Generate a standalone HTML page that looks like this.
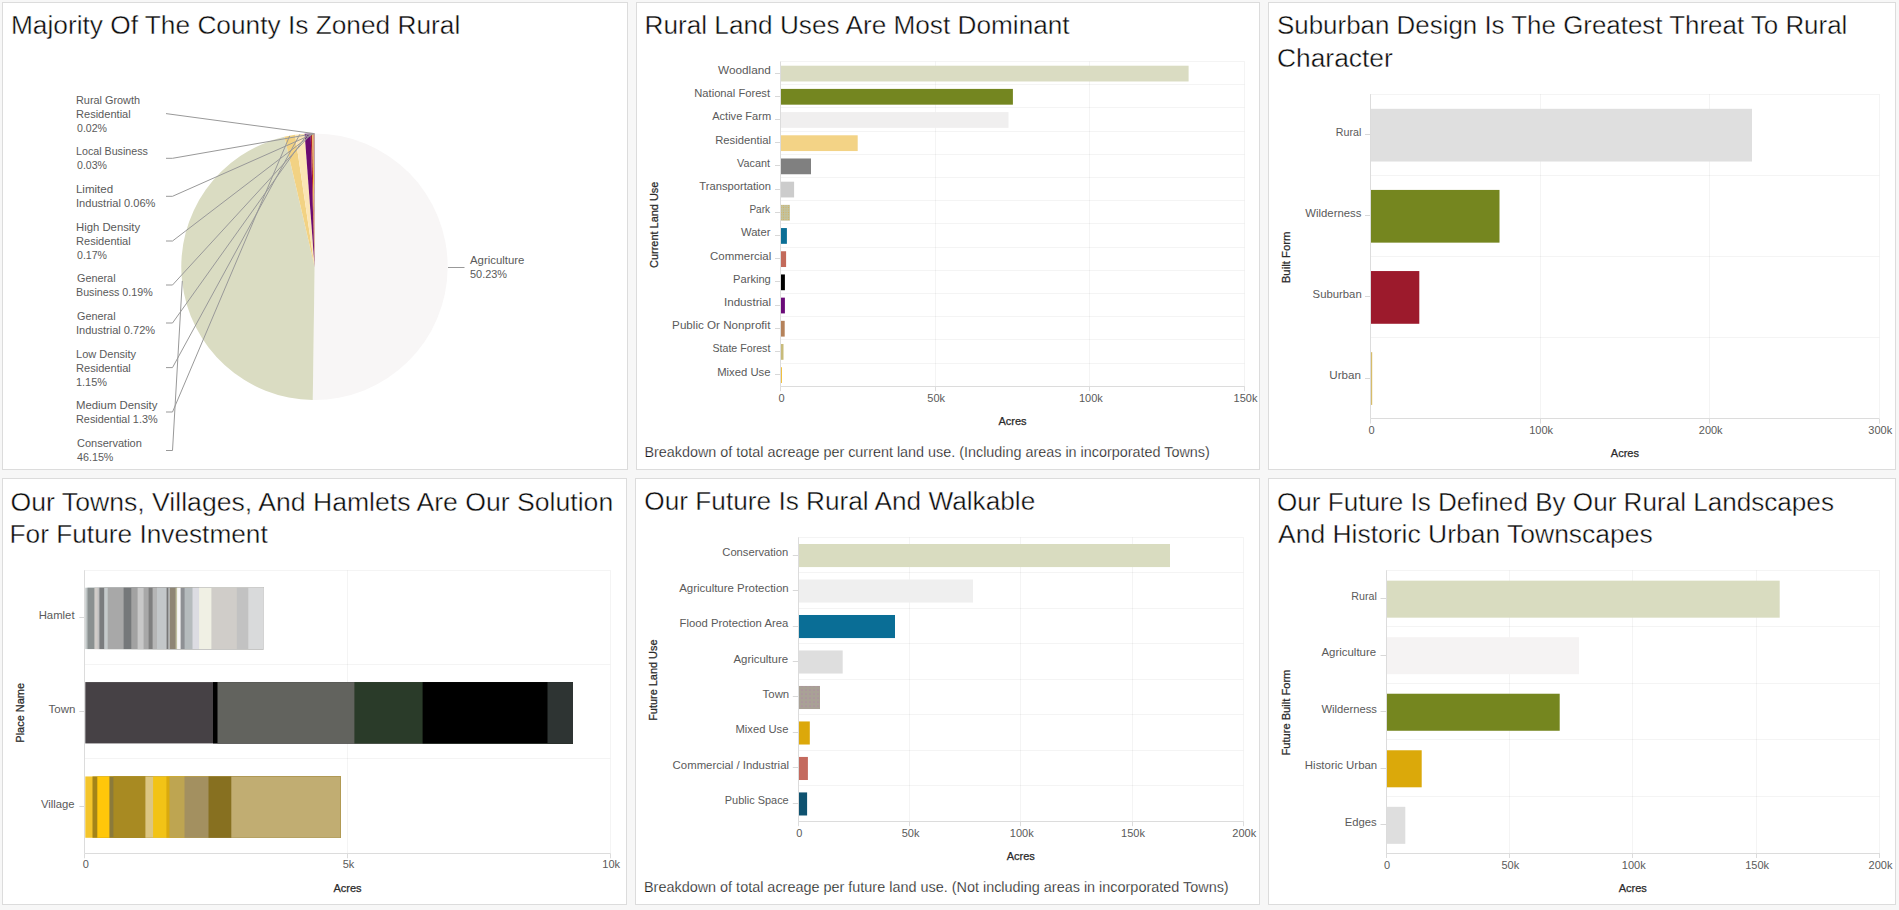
<!DOCTYPE html>
<html><head><meta charset="utf-8"><style>
html,body{margin:0;padding:0;background:#f7f7f7;width:1899px;height:910px;overflow:hidden;}
svg{position:absolute;left:0;top:0;font-family:"Liberation Sans", sans-serif;}
</style></head><body>
<svg width="1899" height="910" viewBox="0 0 1899 910">
<defs>
<pattern id="pPark" x="0" y="0" width="2.4" height="2.4" patternUnits="userSpaceOnUse"><rect width="2.4" height="2.4" fill="#c2c3a0"/><circle cx="1.2" cy="1.2" r="0.55" fill="#d6ae5a"/></pattern>
<pattern id="pTown" x="0" y="0" width="4" height="4" patternUnits="userSpaceOnUse"><rect width="4" height="4" fill="#a9a196"/><circle cx="2" cy="2" r="0.55" fill="#b274b0"/></pattern>
</defs>
<rect x="2.5" y="2.5" width="625" height="467" fill="#fff" stroke="#dcdcdc" stroke-width="1"/>
<rect x="636.5" y="2.5" width="623" height="467" fill="#fff" stroke="#dcdcdc" stroke-width="1"/>
<rect x="1268.5" y="2.5" width="627" height="467" fill="#fff" stroke="#dcdcdc" stroke-width="1"/>
<rect x="2.5" y="478.5" width="624" height="426" fill="#fff" stroke="#dcdcdc" stroke-width="1"/>
<rect x="635.5" y="478.5" width="624" height="426" fill="#fff" stroke="#dcdcdc" stroke-width="1"/>
<rect x="1268.5" y="478.5" width="627" height="426" fill="#fff" stroke="#dcdcdc" stroke-width="1"/>
<text x="10.98" y="34.00" font-size="26" fill="#0a0a0a" textLength="449.33" lengthAdjust="spacingAndGlyphs" stroke="#fff" stroke-width="0.4">Majority Of The County Is Zoned Rural</text>
<text x="644.48" y="34.00" font-size="26" fill="#0a0a0a" textLength="425.18" lengthAdjust="spacingAndGlyphs" stroke="#fff" stroke-width="0.4">Rural Land Uses Are Most Dominant</text>
<text x="1277.00" y="34.00" font-size="26" fill="#0a0a0a" textLength="570.32" lengthAdjust="spacingAndGlyphs" stroke="#fff" stroke-width="0.4">Suburban Design Is The Greatest Threat To Rural</text>
<text x="1276.99" y="67.00" font-size="26" fill="#0a0a0a" textLength="115.77" lengthAdjust="spacingAndGlyphs" stroke="#fff" stroke-width="0.4">Character</text>
<text x="10.58" y="510.50" font-size="26" fill="#0a0a0a" textLength="602.64" lengthAdjust="spacingAndGlyphs" stroke="#fff" stroke-width="0.4">Our Towns, Villages, And Hamlets Are Our Solution</text>
<text x="9.58" y="543.00" font-size="26" fill="#0a0a0a" textLength="258.18" lengthAdjust="spacingAndGlyphs" stroke="#fff" stroke-width="0.4">For Future Investment</text>
<text x="644.39" y="510.00" font-size="26" fill="#0a0a0a" textLength="390.88" lengthAdjust="spacingAndGlyphs" stroke="#fff" stroke-width="0.4">Our Future Is Rural And Walkable</text>
<text x="1277.00" y="510.50" font-size="26" fill="#0a0a0a" textLength="556.94" lengthAdjust="spacingAndGlyphs" stroke="#fff" stroke-width="0.4">Our Future Is Defined By Our Rural Landscapes</text>
<text x="1278.00" y="543.00" font-size="26" fill="#0a0a0a" textLength="374.75" lengthAdjust="spacingAndGlyphs" stroke="#fff" stroke-width="0.4">And Historic Urban Townscapes</text>
<path d="M314.6,266.7 L314.60,133.40 A133.3,133.3 0 1 1 312.76,399.99 Z" fill="#f8f6f6"/>
<path d="M314.6,266.7 L312.76,399.99 A133.3,133.3 0 0 1 284.38,136.87 Z" fill="#dadcc2"/>
<path d="M314.6,266.7 L284.38,136.87 A133.3,133.3 0 0 1 295.08,134.84 Z" fill="#f2d283"/>
<path d="M314.6,266.7 L295.08,134.84 A133.3,133.3 0 0 1 304.64,133.77 Z" fill="#fbe5b5"/>
<path d="M314.6,266.7 L304.64,133.77 A133.3,133.3 0 0 1 310.66,133.46 Z" fill="#6b0b70"/>
<path d="M314.6,266.7 L310.66,133.46 A133.3,133.3 0 0 1 312.26,133.42 Z" fill="#a82030"/>
<path d="M314.6,266.7 L312.26,133.42 A133.3,133.3 0 0 1 313.68,133.40 Z" fill="#f0c040"/>
<path d="M314.6,266.7 L313.68,133.40 A133.3,133.3 0 0 1 314.18,133.40 Z" fill="#a02890"/>
<path d="M314.6,266.7 L314.18,133.40 A133.3,133.3 0 0 1 314.43,133.40 Z" fill="#c06040"/>
<path d="M314.6,266.7 L314.43,133.40 A133.3,133.3 0 0 1 314.60,133.40 Z" fill="#505050"/>
<text x="76.01" y="104.20" font-size="11" fill="#5a5a5a" textLength="63.99" lengthAdjust="spacingAndGlyphs">Rural Growth</text>
<text x="75.99" y="117.80" font-size="11" fill="#5a5a5a" textLength="54.73" lengthAdjust="spacingAndGlyphs">Residential</text>
<text x="77.00" y="131.60" font-size="11" fill="#5a5a5a" textLength="30.00" lengthAdjust="spacingAndGlyphs">0.02%</text>
<polyline points="166,113.6 314.4,133.6" fill="none" stroke="#999999" stroke-width="1"/>
<text x="76.03" y="154.70" font-size="11" fill="#5a5a5a" textLength="71.87" lengthAdjust="spacingAndGlyphs">Local Business</text>
<text x="77.00" y="168.60" font-size="11" fill="#5a5a5a" textLength="30.00" lengthAdjust="spacingAndGlyphs">0.03%</text>
<polyline points="166,158.3 172.5,158.3 314.2,133.6" fill="none" stroke="#999999" stroke-width="1"/>
<text x="75.95" y="192.70" font-size="11" fill="#5a5a5a" textLength="37.24" lengthAdjust="spacingAndGlyphs">Limited</text>
<text x="75.99" y="206.80" font-size="11" fill="#5a5a5a" textLength="79.50" lengthAdjust="spacingAndGlyphs">Industrial 0.06%</text>
<polyline points="166,196.3 172.5,196.3 313.8,133.6" fill="none" stroke="#999999" stroke-width="1"/>
<text x="75.97" y="231.20" font-size="11" fill="#5a5a5a" textLength="64.20" lengthAdjust="spacingAndGlyphs">High Density</text>
<text x="75.99" y="244.80" font-size="11" fill="#5a5a5a" textLength="54.73" lengthAdjust="spacingAndGlyphs">Residential</text>
<text x="77.00" y="258.50" font-size="11" fill="#5a5a5a" textLength="30.00" lengthAdjust="spacingAndGlyphs">0.17%</text>
<polyline points="166,241 172.5,241 312.9,133.6" fill="none" stroke="#999999" stroke-width="1"/>
<text x="77.00" y="281.90" font-size="11" fill="#5a5a5a" textLength="38.54" lengthAdjust="spacingAndGlyphs">General</text>
<text x="76.03" y="295.80" font-size="11" fill="#5a5a5a" textLength="76.67" lengthAdjust="spacingAndGlyphs">Business 0.19%</text>
<polyline points="166,285 172.5,285 311.4,133.6" fill="none" stroke="#999999" stroke-width="1"/>
<text x="77.00" y="320.00" font-size="11" fill="#5a5a5a" textLength="38.54" lengthAdjust="spacingAndGlyphs">General</text>
<text x="76.00" y="333.80" font-size="11" fill="#5a5a5a" textLength="79.19" lengthAdjust="spacingAndGlyphs">Industrial 0.72%</text>
<polyline points="166,323 172.5,323 307.6,133.8" fill="none" stroke="#999999" stroke-width="1"/>
<text x="76.00" y="358.00" font-size="11" fill="#5a5a5a" textLength="60.12" lengthAdjust="spacingAndGlyphs">Low Density</text>
<text x="75.99" y="372.00" font-size="11" fill="#5a5a5a" textLength="54.83" lengthAdjust="spacingAndGlyphs">Residential</text>
<text x="76.01" y="385.80" font-size="11" fill="#5a5a5a" textLength="31.00" lengthAdjust="spacingAndGlyphs">1.15%</text>
<polyline points="166,367.6 172.5,367.6 299.8,134.4" fill="none" stroke="#999999" stroke-width="1"/>
<text x="75.97" y="408.90" font-size="11" fill="#5a5a5a" textLength="81.49" lengthAdjust="spacingAndGlyphs">Medium Density</text>
<text x="76.01" y="422.70" font-size="11" fill="#5a5a5a" textLength="81.66" lengthAdjust="spacingAndGlyphs">Residential 1.3%</text>
<polyline points="166,412 172.5,412 289.7,135.9" fill="none" stroke="#999999" stroke-width="1"/>
<text x="77.00" y="447.00" font-size="11" fill="#5a5a5a">Conservation</text>
<text x="77.00" y="460.80" font-size="11" fill="#5a5a5a" textLength="36.40" lengthAdjust="spacingAndGlyphs">46.15%</text>
<polyline points="166,450.5 172.5,450.5 182.3,280.9" fill="none" stroke="#999999" stroke-width="1"/>
<text x="470.00" y="263.50" font-size="11" fill="#5a5a5a" textLength="54.46" lengthAdjust="spacingAndGlyphs">Agriculture</text>
<text x="470.00" y="278.20" font-size="11" fill="#5a5a5a" textLength="37.01" lengthAdjust="spacingAndGlyphs">50.23%</text>
<line x1="448.00" y1="267.50" x2="464.50" y2="267.50" stroke="#999999" stroke-width="1"/>
<line x1="780.50" y1="61.50" x2="1244.50" y2="61.50" stroke="#000" stroke-opacity="0.045" stroke-width="1"/>
<line x1="780.50" y1="84.50" x2="1244.50" y2="84.50" stroke="#000" stroke-opacity="0.045" stroke-width="1"/>
<line x1="780.50" y1="107.50" x2="1244.50" y2="107.50" stroke="#000" stroke-opacity="0.045" stroke-width="1"/>
<line x1="780.50" y1="131.50" x2="1244.50" y2="131.50" stroke="#000" stroke-opacity="0.045" stroke-width="1"/>
<line x1="780.50" y1="154.50" x2="1244.50" y2="154.50" stroke="#000" stroke-opacity="0.045" stroke-width="1"/>
<line x1="780.50" y1="177.50" x2="1244.50" y2="177.50" stroke="#000" stroke-opacity="0.045" stroke-width="1"/>
<line x1="780.50" y1="200.50" x2="1244.50" y2="200.50" stroke="#000" stroke-opacity="0.045" stroke-width="1"/>
<line x1="780.50" y1="223.50" x2="1244.50" y2="223.50" stroke="#000" stroke-opacity="0.045" stroke-width="1"/>
<line x1="780.50" y1="247.50" x2="1244.50" y2="247.50" stroke="#000" stroke-opacity="0.045" stroke-width="1"/>
<line x1="780.50" y1="270.50" x2="1244.50" y2="270.50" stroke="#000" stroke-opacity="0.045" stroke-width="1"/>
<line x1="780.50" y1="293.50" x2="1244.50" y2="293.50" stroke="#000" stroke-opacity="0.045" stroke-width="1"/>
<line x1="780.50" y1="316.50" x2="1244.50" y2="316.50" stroke="#000" stroke-opacity="0.045" stroke-width="1"/>
<line x1="780.50" y1="339.50" x2="1244.50" y2="339.50" stroke="#000" stroke-opacity="0.045" stroke-width="1"/>
<line x1="780.50" y1="363.50" x2="1244.50" y2="363.50" stroke="#000" stroke-opacity="0.045" stroke-width="1"/>
<line x1="935.50" y1="61.50" x2="935.50" y2="386.20" stroke="#000" stroke-opacity="0.045" stroke-width="1"/>
<line x1="1089.50" y1="61.50" x2="1089.50" y2="386.20" stroke="#000" stroke-opacity="0.045" stroke-width="1"/>
<line x1="1244.50" y1="61.50" x2="1244.50" y2="386.20" stroke="#000" stroke-opacity="0.045" stroke-width="1"/>
<rect x="781.00" y="65.71" width="407.60" height="15.77" fill="#dadcc2"/>
<line x1="775.00" y1="73.50" x2="780.50" y2="73.50" stroke="#d8d8d8" stroke-width="1"/>
<text x="718.00" y="74.10" font-size="11" fill="#5a5a5a" textLength="52.87" lengthAdjust="spacingAndGlyphs">Woodland</text>
<rect x="781.00" y="88.90" width="231.90" height="15.77" fill="#748620"/>
<line x1="775.00" y1="96.50" x2="780.50" y2="96.50" stroke="#d8d8d8" stroke-width="1"/>
<text x="694.28" y="97.29" font-size="11" fill="#5a5a5a" textLength="75.80" lengthAdjust="spacingAndGlyphs">National Forest</text>
<rect x="781.00" y="112.10" width="227.50" height="15.77" fill="#f0efef"/>
<line x1="775.00" y1="119.50" x2="780.50" y2="119.50" stroke="#d8d8d8" stroke-width="1"/>
<text x="712.20" y="120.48" font-size="11" fill="#5a5a5a" textLength="58.99" lengthAdjust="spacingAndGlyphs">Active Farm</text>
<rect x="781.00" y="135.29" width="76.70" height="15.77" fill="#f3d386"/>
<line x1="775.00" y1="142.50" x2="780.50" y2="142.50" stroke="#d8d8d8" stroke-width="1"/>
<text x="715.18" y="143.68" font-size="11" fill="#5a5a5a" textLength="55.76" lengthAdjust="spacingAndGlyphs">Residential</text>
<rect x="781.00" y="158.48" width="30.00" height="15.77" fill="#808080"/>
<line x1="775.00" y1="165.50" x2="780.50" y2="165.50" stroke="#d8d8d8" stroke-width="1"/>
<text x="737.10" y="166.87" font-size="11" fill="#5a5a5a" textLength="32.85" lengthAdjust="spacingAndGlyphs">Vacant</text>
<rect x="781.00" y="181.68" width="13.10" height="15.77" fill="#cccccc"/>
<line x1="775.00" y1="189.50" x2="780.50" y2="189.50" stroke="#d8d8d8" stroke-width="1"/>
<text x="699.30" y="190.06" font-size="11" fill="#5a5a5a" textLength="71.74" lengthAdjust="spacingAndGlyphs">Transportation</text>
<rect x="781.00" y="204.87" width="8.90" height="15.77" fill="url(#pPark)"/>
<line x1="775.00" y1="212.50" x2="780.50" y2="212.50" stroke="#d8d8d8" stroke-width="1"/>
<text x="749.38" y="213.25" font-size="11" fill="#5a5a5a" textLength="20.77" lengthAdjust="spacingAndGlyphs">Park</text>
<rect x="781.00" y="228.06" width="5.90" height="15.77" fill="#0b6f96"/>
<line x1="775.00" y1="235.50" x2="780.50" y2="235.50" stroke="#d8d8d8" stroke-width="1"/>
<text x="741.00" y="236.45" font-size="11" fill="#5a5a5a" textLength="29.44" lengthAdjust="spacingAndGlyphs">Water</text>
<rect x="781.00" y="251.25" width="5.10" height="15.77" fill="#c36a5a"/>
<line x1="775.00" y1="258.50" x2="780.50" y2="258.50" stroke="#d8d8d8" stroke-width="1"/>
<text x="710.10" y="259.64" font-size="11" fill="#5a5a5a" textLength="61.12" lengthAdjust="spacingAndGlyphs">Commercial</text>
<rect x="781.00" y="274.45" width="3.90" height="15.77" fill="#000000"/>
<line x1="775.00" y1="281.50" x2="780.50" y2="281.50" stroke="#d8d8d8" stroke-width="1"/>
<text x="733.09" y="282.83" font-size="11" fill="#5a5a5a" textLength="37.71" lengthAdjust="spacingAndGlyphs">Parking</text>
<rect x="781.00" y="297.64" width="3.90" height="15.77" fill="#6a0a78"/>
<line x1="775.00" y1="305.50" x2="780.50" y2="305.50" stroke="#d8d8d8" stroke-width="1"/>
<text x="723.94" y="306.02" font-size="11" fill="#5a5a5a" textLength="47.24" lengthAdjust="spacingAndGlyphs">Industrial</text>
<rect x="781.00" y="320.83" width="3.70" height="15.77" fill="#b5825a"/>
<line x1="775.00" y1="328.50" x2="780.50" y2="328.50" stroke="#d8d8d8" stroke-width="1"/>
<text x="672.14" y="329.22" font-size="11" fill="#5a5a5a" textLength="98.29" lengthAdjust="spacingAndGlyphs">Public Or Nonprofit</text>
<rect x="781.00" y="344.03" width="2.50" height="15.77" fill="#c8bb7a"/>
<line x1="775.00" y1="351.50" x2="780.50" y2="351.50" stroke="#d8d8d8" stroke-width="1"/>
<text x="712.40" y="352.41" font-size="11" fill="#5a5a5a" textLength="58.02" lengthAdjust="spacingAndGlyphs">State Forest</text>
<rect x="781.00" y="367.22" width="1.00" height="15.77" fill="#f0c040"/>
<line x1="775.00" y1="374.50" x2="780.50" y2="374.50" stroke="#d8d8d8" stroke-width="1"/>
<text x="717.17" y="375.60" font-size="11" fill="#5a5a5a" textLength="53.29" lengthAdjust="spacingAndGlyphs">Mixed Use</text>
<line x1="780.50" y1="61.50" x2="780.50" y2="386.20" stroke="#dcdcdc" stroke-width="1"/>
<line x1="780.50" y1="386.50" x2="1244.50" y2="386.50" stroke="#dcdcdc" stroke-width="1"/>
<line x1="780.50" y1="386.20" x2="780.50" y2="391.20" stroke="#dcdcdc" stroke-width="1"/>
<text x="781.50" y="401.80" font-size="11" fill="#5a5a5a" text-anchor="middle">0</text>
<line x1="935.50" y1="386.20" x2="935.50" y2="391.20" stroke="#dcdcdc" stroke-width="1"/>
<text x="936.17" y="401.80" font-size="11" fill="#5a5a5a" text-anchor="middle">50k</text>
<line x1="1089.50" y1="386.20" x2="1089.50" y2="391.20" stroke="#dcdcdc" stroke-width="1"/>
<text x="1090.83" y="401.80" font-size="11" fill="#5a5a5a" text-anchor="middle">100k</text>
<line x1="1244.50" y1="386.20" x2="1244.50" y2="391.20" stroke="#dcdcdc" stroke-width="1"/>
<text x="1245.50" y="401.80" font-size="11" fill="#5a5a5a" text-anchor="middle">150k</text>
<text x="1012.50" y="424.80" font-size="11" fill="#2a2a2a" text-anchor="middle" textLength="28.20" lengthAdjust="spacingAndGlyphs" stroke="#2a2a2a" stroke-width="0.25">Acres</text>
<text transform="translate(658.0,224.8) rotate(-90)" font-size="11" stroke="#2a2a2a" stroke-width="0.25" fill="#2a2a2a" text-anchor="middle" textLength="86.4" lengthAdjust="spacingAndGlyphs">Current Land Use</text>
<text x="644.47" y="457.00" font-size="14" fill="#111" textLength="565.28" lengthAdjust="spacingAndGlyphs" stroke="#fff" stroke-width="0.25">Breakdown of total acreage per current land use. (Including areas in incorporated Towns)</text>
<line x1="1370.50" y1="94.50" x2="1879.30" y2="94.50" stroke="#000" stroke-opacity="0.045" stroke-width="1"/>
<line x1="1370.50" y1="175.50" x2="1879.30" y2="175.50" stroke="#000" stroke-opacity="0.045" stroke-width="1"/>
<line x1="1370.50" y1="256.50" x2="1879.30" y2="256.50" stroke="#000" stroke-opacity="0.045" stroke-width="1"/>
<line x1="1370.50" y1="337.50" x2="1879.30" y2="337.50" stroke="#000" stroke-opacity="0.045" stroke-width="1"/>
<line x1="1540.50" y1="94.10" x2="1540.50" y2="418.60" stroke="#000" stroke-opacity="0.045" stroke-width="1"/>
<line x1="1709.50" y1="94.10" x2="1709.50" y2="418.60" stroke="#000" stroke-opacity="0.045" stroke-width="1"/>
<line x1="1879.50" y1="94.10" x2="1879.50" y2="418.60" stroke="#000" stroke-opacity="0.045" stroke-width="1"/>
<rect x="1371.00" y="108.80" width="381.00" height="52.73" fill="#dfdfdf"/>
<line x1="1365.00" y1="134.50" x2="1370.50" y2="134.50" stroke="#d8d8d8" stroke-width="1"/>
<text x="1335.73" y="135.66" font-size="11" fill="#5a5a5a" textLength="25.56" lengthAdjust="spacingAndGlyphs">Rural</text>
<rect x="1371.00" y="189.92" width="128.50" height="52.73" fill="#75861f"/>
<line x1="1365.00" y1="215.50" x2="1370.50" y2="215.50" stroke="#d8d8d8" stroke-width="1"/>
<text x="1305.30" y="216.79" font-size="11" fill="#5a5a5a" textLength="56.12" lengthAdjust="spacingAndGlyphs">Wilderness</text>
<rect x="1371.00" y="271.05" width="48.30" height="52.73" fill="#9c1a2c"/>
<line x1="1365.00" y1="296.50" x2="1370.50" y2="296.50" stroke="#d8d8d8" stroke-width="1"/>
<text x="1312.60" y="297.91" font-size="11" fill="#5a5a5a" textLength="49.14" lengthAdjust="spacingAndGlyphs">Suburban</text>
<rect x="1371.00" y="352.17" width="1.20" height="52.73" fill="#d6bc6a"/>
<line x1="1365.00" y1="378.50" x2="1370.50" y2="378.50" stroke="#d8d8d8" stroke-width="1"/>
<text x="1329.34" y="379.04" font-size="11" fill="#5a5a5a" textLength="31.62" lengthAdjust="spacingAndGlyphs">Urban</text>
<line x1="1370.50" y1="94.10" x2="1370.50" y2="418.60" stroke="#dcdcdc" stroke-width="1"/>
<line x1="1370.50" y1="418.50" x2="1879.30" y2="418.50" stroke="#dcdcdc" stroke-width="1"/>
<line x1="1370.50" y1="418.60" x2="1370.50" y2="423.60" stroke="#dcdcdc" stroke-width="1"/>
<text x="1371.50" y="434.00" font-size="11" fill="#5a5a5a" text-anchor="middle">0</text>
<line x1="1540.50" y1="418.60" x2="1540.50" y2="423.60" stroke="#dcdcdc" stroke-width="1"/>
<text x="1541.10" y="434.00" font-size="11" fill="#5a5a5a" text-anchor="middle">100k</text>
<line x1="1709.50" y1="418.60" x2="1709.50" y2="423.60" stroke="#dcdcdc" stroke-width="1"/>
<text x="1710.70" y="434.00" font-size="11" fill="#5a5a5a" text-anchor="middle">200k</text>
<line x1="1879.50" y1="418.60" x2="1879.50" y2="423.60" stroke="#dcdcdc" stroke-width="1"/>
<text x="1880.30" y="434.00" font-size="11" fill="#5a5a5a" text-anchor="middle">300k</text>
<text x="1624.90" y="456.50" font-size="11" fill="#2a2a2a" text-anchor="middle" textLength="28.20" lengthAdjust="spacingAndGlyphs" stroke="#2a2a2a" stroke-width="0.25">Acres</text>
<text transform="translate(1290.0,257.4) rotate(-90)" font-size="11" stroke="#2a2a2a" stroke-width="0.25" fill="#2a2a2a" text-anchor="middle" textLength="51.6" lengthAdjust="spacingAndGlyphs">Built Form</text>
<line x1="84.80" y1="570.50" x2="610.20" y2="570.50" stroke="#000" stroke-opacity="0.045" stroke-width="1"/>
<line x1="84.80" y1="664.50" x2="610.20" y2="664.50" stroke="#000" stroke-opacity="0.045" stroke-width="1"/>
<line x1="84.80" y1="758.50" x2="610.20" y2="758.50" stroke="#000" stroke-opacity="0.045" stroke-width="1"/>
<line x1="347.50" y1="570.20" x2="347.50" y2="853.30" stroke="#000" stroke-opacity="0.045" stroke-width="1"/>
<line x1="610.50" y1="570.20" x2="610.50" y2="853.30" stroke="#000" stroke-opacity="0.045" stroke-width="1"/>
<rect x="85.30" y="587.71" width="178.30" height="61.34" fill="#bfc5c5"/>
<rect x="87.50" y="587.71" width="176.10" height="61.34" fill="#8a9090"/>
<rect x="94.40" y="587.71" width="169.20" height="61.34" fill="#d0ccc8"/>
<rect x="97.60" y="587.71" width="166.00" height="61.34" fill="#c0c0c0"/>
<rect x="99.40" y="587.71" width="164.20" height="61.34" fill="#7a7c7e"/>
<rect x="104.20" y="587.71" width="159.40" height="61.34" fill="#c5cacb"/>
<rect x="107.70" y="587.71" width="155.90" height="61.34" fill="#a8a8a8"/>
<rect x="123.60" y="587.71" width="140.00" height="61.34" fill="#75787a"/>
<rect x="131.30" y="587.71" width="132.30" height="61.34" fill="#a2a2a2"/>
<rect x="137.60" y="587.71" width="126.00" height="61.34" fill="#c8c8c8"/>
<rect x="143.60" y="587.71" width="120.00" height="61.34" fill="#a8a8a8"/>
<rect x="148.60" y="587.71" width="115.00" height="61.34" fill="#7f7f7f"/>
<rect x="152.60" y="587.71" width="111.00" height="61.34" fill="#b5b5b5"/>
<rect x="157.00" y="587.71" width="106.60" height="61.34" fill="#c3c7c9"/>
<rect x="166.60" y="587.71" width="97.00" height="61.34" fill="#777777"/>
<rect x="168.40" y="587.71" width="95.20" height="61.34" fill="#c3c7c9"/>
<rect x="169.70" y="587.71" width="93.90" height="61.34" fill="#8e8574"/>
<rect x="175.60" y="587.71" width="88.00" height="61.34" fill="#c0bfa0"/>
<rect x="177.10" y="587.71" width="86.50" height="61.34" fill="#f5f5f5"/>
<rect x="180.60" y="587.71" width="83.00" height="61.34" fill="#8e9094"/>
<rect x="184.60" y="587.71" width="79.00" height="61.34" fill="#b5bbbd"/>
<rect x="192.50" y="587.71" width="71.10" height="61.34" fill="#dcdce2"/>
<rect x="199.10" y="587.71" width="64.50" height="61.34" fill="#f0f0e4"/>
<rect x="211.40" y="587.71" width="52.20" height="61.34" fill="#d0cdc9"/>
<rect x="236.80" y="587.71" width="26.80" height="61.34" fill="#c2c2c2"/>
<rect x="248.30" y="587.71" width="15.30" height="61.34" fill="#d9dadb"/>
<line x1="79.30" y1="617.50" x2="84.80" y2="617.50" stroke="#d8d8d8" stroke-width="1"/>
<text x="38.67" y="619.08" font-size="11" fill="#5a5a5a" textLength="35.87" lengthAdjust="spacingAndGlyphs">Hamlet</text>
<rect x="85.30" y="682.08" width="487.70" height="61.34" fill="#464145"/>
<rect x="213.00" y="682.08" width="360.00" height="61.34" fill="#000000"/>
<rect x="217.50" y="682.08" width="355.50" height="61.34" fill="#62635e"/>
<rect x="354.40" y="682.08" width="218.60" height="61.34" fill="#2a3b29"/>
<rect x="422.60" y="682.08" width="150.40" height="61.34" fill="#000000"/>
<rect x="547.50" y="682.08" width="25.50" height="61.34" fill="#2e3433"/>
<line x1="79.30" y1="711.50" x2="84.80" y2="711.50" stroke="#d8d8d8" stroke-width="1"/>
<text x="48.60" y="713.45" font-size="11" fill="#5a5a5a" textLength="26.82" lengthAdjust="spacingAndGlyphs">Town</text>
<rect x="85.30" y="776.45" width="255.20" height="61.34" fill="#f4c52c"/>
<rect x="92.50" y="776.45" width="248.00" height="61.34" fill="#a48418"/>
<rect x="97.30" y="776.45" width="243.20" height="61.34" fill="#ffc70a"/>
<rect x="109.40" y="776.45" width="231.10" height="61.34" fill="#8b7a3a"/>
<rect x="113.40" y="776.45" width="227.10" height="61.34" fill="#a88a22"/>
<rect x="145.40" y="776.45" width="195.10" height="61.34" fill="#dcc682"/>
<rect x="153.10" y="776.45" width="187.40" height="61.34" fill="#f2c316"/>
<rect x="166.40" y="776.45" width="174.10" height="61.34" fill="#d9a90e"/>
<rect x="169.50" y="776.45" width="171.00" height="61.34" fill="#bea551"/>
<rect x="184.50" y="776.45" width="156.00" height="61.34" fill="#a39060"/>
<rect x="208.50" y="776.45" width="132.00" height="61.34" fill="#877020"/>
<rect x="231.30" y="776.45" width="109.20" height="61.34" fill="#c1ad72"/>
<line x1="79.30" y1="806.50" x2="84.80" y2="806.50" stroke="#d8d8d8" stroke-width="1"/>
<text x="40.90" y="807.82" font-size="11" fill="#5a5a5a" textLength="33.62" lengthAdjust="spacingAndGlyphs">Village</text>
<line x1="84.50" y1="570.20" x2="84.50" y2="853.30" stroke="#dcdcdc" stroke-width="1"/>
<line x1="84.80" y1="853.50" x2="610.20" y2="853.50" stroke="#dcdcdc" stroke-width="1"/>
<line x1="84.50" y1="853.30" x2="84.50" y2="858.30" stroke="#dcdcdc" stroke-width="1"/>
<text x="85.80" y="868.00" font-size="11" fill="#5a5a5a" text-anchor="middle">0</text>
<line x1="347.50" y1="853.30" x2="347.50" y2="858.30" stroke="#dcdcdc" stroke-width="1"/>
<text x="348.50" y="868.00" font-size="11" fill="#5a5a5a" text-anchor="middle">5k</text>
<line x1="610.50" y1="853.30" x2="610.50" y2="858.30" stroke="#dcdcdc" stroke-width="1"/>
<text x="611.20" y="868.00" font-size="11" fill="#5a5a5a" text-anchor="middle">10k</text>
<text x="347.50" y="891.50" font-size="11" fill="#2a2a2a" text-anchor="middle" textLength="28.20" lengthAdjust="spacingAndGlyphs" stroke="#2a2a2a" stroke-width="0.25">Acres</text>
<text transform="translate(24.0,712.8) rotate(-90)" font-size="11" stroke="#2a2a2a" stroke-width="0.25" fill="#2a2a2a" text-anchor="middle" textLength="59.8" lengthAdjust="spacingAndGlyphs">Place Name</text>
<line x1="798.30" y1="537.50" x2="1243.30" y2="537.50" stroke="#000" stroke-opacity="0.045" stroke-width="1"/>
<line x1="798.30" y1="572.50" x2="1243.30" y2="572.50" stroke="#000" stroke-opacity="0.045" stroke-width="1"/>
<line x1="798.30" y1="608.50" x2="1243.30" y2="608.50" stroke="#000" stroke-opacity="0.045" stroke-width="1"/>
<line x1="798.30" y1="643.50" x2="1243.30" y2="643.50" stroke="#000" stroke-opacity="0.045" stroke-width="1"/>
<line x1="798.30" y1="679.50" x2="1243.30" y2="679.50" stroke="#000" stroke-opacity="0.045" stroke-width="1"/>
<line x1="798.30" y1="714.50" x2="1243.30" y2="714.50" stroke="#000" stroke-opacity="0.045" stroke-width="1"/>
<line x1="798.30" y1="750.50" x2="1243.30" y2="750.50" stroke="#000" stroke-opacity="0.045" stroke-width="1"/>
<line x1="798.30" y1="785.50" x2="1243.30" y2="785.50" stroke="#000" stroke-opacity="0.045" stroke-width="1"/>
<line x1="909.50" y1="537.30" x2="909.50" y2="821.20" stroke="#000" stroke-opacity="0.045" stroke-width="1"/>
<line x1="1020.50" y1="537.30" x2="1020.50" y2="821.20" stroke="#000" stroke-opacity="0.045" stroke-width="1"/>
<line x1="1132.50" y1="537.30" x2="1132.50" y2="821.20" stroke="#000" stroke-opacity="0.045" stroke-width="1"/>
<line x1="1243.50" y1="537.30" x2="1243.50" y2="821.20" stroke="#000" stroke-opacity="0.045" stroke-width="1"/>
<rect x="798.80" y="544.01" width="371.20" height="23.07" fill="#d9dcc0"/>
<line x1="792.80" y1="555.50" x2="798.30" y2="555.50" stroke="#d8d8d8" stroke-width="1"/>
<text x="722.30" y="556.04" font-size="11" fill="#5a5a5a" textLength="66.02" lengthAdjust="spacingAndGlyphs">Conservation</text>
<rect x="798.80" y="579.50" width="174.20" height="23.07" fill="#efefef"/>
<line x1="792.80" y1="590.50" x2="798.30" y2="590.50" stroke="#d8d8d8" stroke-width="1"/>
<text x="679.20" y="591.53" font-size="11" fill="#5a5a5a" textLength="109.48" lengthAdjust="spacingAndGlyphs">Agriculture Protection</text>
<rect x="798.80" y="614.99" width="96.20" height="23.07" fill="#0a6e96"/>
<line x1="792.80" y1="626.50" x2="798.30" y2="626.50" stroke="#d8d8d8" stroke-width="1"/>
<text x="679.47" y="627.02" font-size="11" fill="#5a5a5a" textLength="108.82" lengthAdjust="spacingAndGlyphs">Flood Protection Area</text>
<rect x="798.80" y="650.47" width="43.90" height="23.07" fill="#dedede"/>
<line x1="792.80" y1="661.50" x2="798.30" y2="661.50" stroke="#d8d8d8" stroke-width="1"/>
<text x="733.40" y="662.51" font-size="11" fill="#5a5a5a" textLength="54.66" lengthAdjust="spacingAndGlyphs">Agriculture</text>
<rect x="798.80" y="685.96" width="21.20" height="23.07" fill="url(#pTown)"/>
<line x1="792.80" y1="696.50" x2="798.30" y2="696.50" stroke="#d8d8d8" stroke-width="1"/>
<text x="762.60" y="697.99" font-size="11" fill="#5a5a5a" textLength="26.61" lengthAdjust="spacingAndGlyphs">Town</text>
<rect x="798.80" y="721.45" width="11.00" height="23.07" fill="#dca80a"/>
<line x1="792.80" y1="732.50" x2="798.30" y2="732.50" stroke="#d8d8d8" stroke-width="1"/>
<text x="735.48" y="733.48" font-size="11" fill="#5a5a5a" textLength="52.99" lengthAdjust="spacingAndGlyphs">Mixed Use</text>
<rect x="798.80" y="756.94" width="9.10" height="23.07" fill="#c46a5e"/>
<line x1="792.80" y1="767.50" x2="798.30" y2="767.50" stroke="#d8d8d8" stroke-width="1"/>
<text x="672.60" y="768.97" font-size="11" fill="#5a5a5a" textLength="116.40" lengthAdjust="spacingAndGlyphs">Commercial / Industrial</text>
<rect x="798.80" y="792.42" width="8.30" height="23.07" fill="#0f5270"/>
<line x1="792.80" y1="803.50" x2="798.30" y2="803.50" stroke="#d8d8d8" stroke-width="1"/>
<text x="724.80" y="804.46" font-size="11" fill="#5a5a5a" textLength="63.91" lengthAdjust="spacingAndGlyphs">Public Space</text>
<line x1="798.50" y1="537.30" x2="798.50" y2="821.20" stroke="#dcdcdc" stroke-width="1"/>
<line x1="798.30" y1="821.50" x2="1243.30" y2="821.50" stroke="#dcdcdc" stroke-width="1"/>
<line x1="798.50" y1="821.20" x2="798.50" y2="826.20" stroke="#dcdcdc" stroke-width="1"/>
<text x="799.30" y="836.50" font-size="11" fill="#5a5a5a" text-anchor="middle">0</text>
<line x1="909.50" y1="821.20" x2="909.50" y2="826.20" stroke="#dcdcdc" stroke-width="1"/>
<text x="910.55" y="836.50" font-size="11" fill="#5a5a5a" text-anchor="middle">50k</text>
<line x1="1020.50" y1="821.20" x2="1020.50" y2="826.20" stroke="#dcdcdc" stroke-width="1"/>
<text x="1021.80" y="836.50" font-size="11" fill="#5a5a5a" text-anchor="middle">100k</text>
<line x1="1132.50" y1="821.20" x2="1132.50" y2="826.20" stroke="#dcdcdc" stroke-width="1"/>
<text x="1133.05" y="836.50" font-size="11" fill="#5a5a5a" text-anchor="middle">150k</text>
<line x1="1243.50" y1="821.20" x2="1243.50" y2="826.20" stroke="#dcdcdc" stroke-width="1"/>
<text x="1244.30" y="836.50" font-size="11" fill="#5a5a5a" text-anchor="middle">200k</text>
<text x="1020.80" y="859.50" font-size="11" fill="#2a2a2a" text-anchor="middle" textLength="28.20" lengthAdjust="spacingAndGlyphs" stroke="#2a2a2a" stroke-width="0.25">Acres</text>
<text transform="translate(657.0,680.2) rotate(-90)" font-size="11" stroke="#2a2a2a" stroke-width="0.25" fill="#2a2a2a" text-anchor="middle" textLength="81.3" lengthAdjust="spacingAndGlyphs">Future Land Use</text>
<text x="643.97" y="892.00" font-size="14" fill="#111" textLength="584.71" lengthAdjust="spacingAndGlyphs" stroke="#fff" stroke-width="0.25">Breakdown of total acreage per future land use. (Not including areas in incorporated Towns)</text>
<line x1="1386.00" y1="570.50" x2="1879.50" y2="570.50" stroke="#000" stroke-opacity="0.045" stroke-width="1"/>
<line x1="1386.00" y1="626.50" x2="1879.50" y2="626.50" stroke="#000" stroke-opacity="0.045" stroke-width="1"/>
<line x1="1386.00" y1="683.50" x2="1879.50" y2="683.50" stroke="#000" stroke-opacity="0.045" stroke-width="1"/>
<line x1="1386.00" y1="739.50" x2="1879.50" y2="739.50" stroke="#000" stroke-opacity="0.045" stroke-width="1"/>
<line x1="1386.00" y1="796.50" x2="1879.50" y2="796.50" stroke="#000" stroke-opacity="0.045" stroke-width="1"/>
<line x1="1509.50" y1="570.30" x2="1509.50" y2="853.00" stroke="#000" stroke-opacity="0.045" stroke-width="1"/>
<line x1="1632.50" y1="570.30" x2="1632.50" y2="853.00" stroke="#000" stroke-opacity="0.045" stroke-width="1"/>
<line x1="1756.50" y1="570.30" x2="1756.50" y2="853.00" stroke="#000" stroke-opacity="0.045" stroke-width="1"/>
<line x1="1879.50" y1="570.30" x2="1879.50" y2="853.00" stroke="#000" stroke-opacity="0.045" stroke-width="1"/>
<rect x="1386.50" y="580.65" width="393.20" height="37.03" fill="#d9dcc0"/>
<line x1="1380.50" y1="598.50" x2="1386.00" y2="598.50" stroke="#d8d8d8" stroke-width="1"/>
<text x="1351.33" y="599.77" font-size="11" fill="#5a5a5a" textLength="25.46" lengthAdjust="spacingAndGlyphs">Rural</text>
<rect x="1386.50" y="637.19" width="192.50" height="37.03" fill="#f5f3f3"/>
<line x1="1380.50" y1="655.50" x2="1386.00" y2="655.50" stroke="#d8d8d8" stroke-width="1"/>
<text x="1321.50" y="656.31" font-size="11" fill="#5a5a5a" textLength="54.56" lengthAdjust="spacingAndGlyphs">Agriculture</text>
<rect x="1386.50" y="693.73" width="173.20" height="37.03" fill="#75861f"/>
<line x1="1380.50" y1="711.50" x2="1386.00" y2="711.50" stroke="#d8d8d8" stroke-width="1"/>
<text x="1321.50" y="712.85" font-size="11" fill="#5a5a5a" textLength="55.41" lengthAdjust="spacingAndGlyphs">Wilderness</text>
<rect x="1386.50" y="750.27" width="35.20" height="37.03" fill="#dba90a"/>
<line x1="1380.50" y1="768.50" x2="1386.00" y2="768.50" stroke="#d8d8d8" stroke-width="1"/>
<text x="1304.86" y="769.39" font-size="11" fill="#5a5a5a" textLength="72.35" lengthAdjust="spacingAndGlyphs">Historic Urban</text>
<rect x="1386.50" y="806.81" width="18.80" height="37.03" fill="#dedede"/>
<line x1="1380.50" y1="824.50" x2="1386.00" y2="824.50" stroke="#d8d8d8" stroke-width="1"/>
<text x="1344.78" y="825.93" font-size="11" fill="#5a5a5a" textLength="31.93" lengthAdjust="spacingAndGlyphs">Edges</text>
<line x1="1386.50" y1="570.30" x2="1386.50" y2="853.00" stroke="#dcdcdc" stroke-width="1"/>
<line x1="1386.00" y1="853.50" x2="1879.50" y2="853.50" stroke="#dcdcdc" stroke-width="1"/>
<line x1="1386.50" y1="853.00" x2="1386.50" y2="858.00" stroke="#dcdcdc" stroke-width="1"/>
<text x="1387.00" y="868.50" font-size="11" fill="#5a5a5a" text-anchor="middle">0</text>
<line x1="1509.50" y1="853.00" x2="1509.50" y2="858.00" stroke="#dcdcdc" stroke-width="1"/>
<text x="1510.38" y="868.50" font-size="11" fill="#5a5a5a" text-anchor="middle">50k</text>
<line x1="1632.50" y1="853.00" x2="1632.50" y2="858.00" stroke="#dcdcdc" stroke-width="1"/>
<text x="1633.75" y="868.50" font-size="11" fill="#5a5a5a" text-anchor="middle">100k</text>
<line x1="1756.50" y1="853.00" x2="1756.50" y2="858.00" stroke="#dcdcdc" stroke-width="1"/>
<text x="1757.12" y="868.50" font-size="11" fill="#5a5a5a" text-anchor="middle">150k</text>
<line x1="1879.50" y1="853.00" x2="1879.50" y2="858.00" stroke="#dcdcdc" stroke-width="1"/>
<text x="1880.50" y="868.50" font-size="11" fill="#5a5a5a" text-anchor="middle">200k</text>
<text x="1632.75" y="891.50" font-size="11" fill="#2a2a2a" text-anchor="middle" textLength="28.20" lengthAdjust="spacingAndGlyphs" stroke="#2a2a2a" stroke-width="0.25">Acres</text>
<text transform="translate(1290.0,712.6) rotate(-90)" font-size="11" stroke="#2a2a2a" stroke-width="0.25" fill="#2a2a2a" text-anchor="middle" textLength="86" lengthAdjust="spacingAndGlyphs">Future Built Form</text>
</svg>
</body></html>
